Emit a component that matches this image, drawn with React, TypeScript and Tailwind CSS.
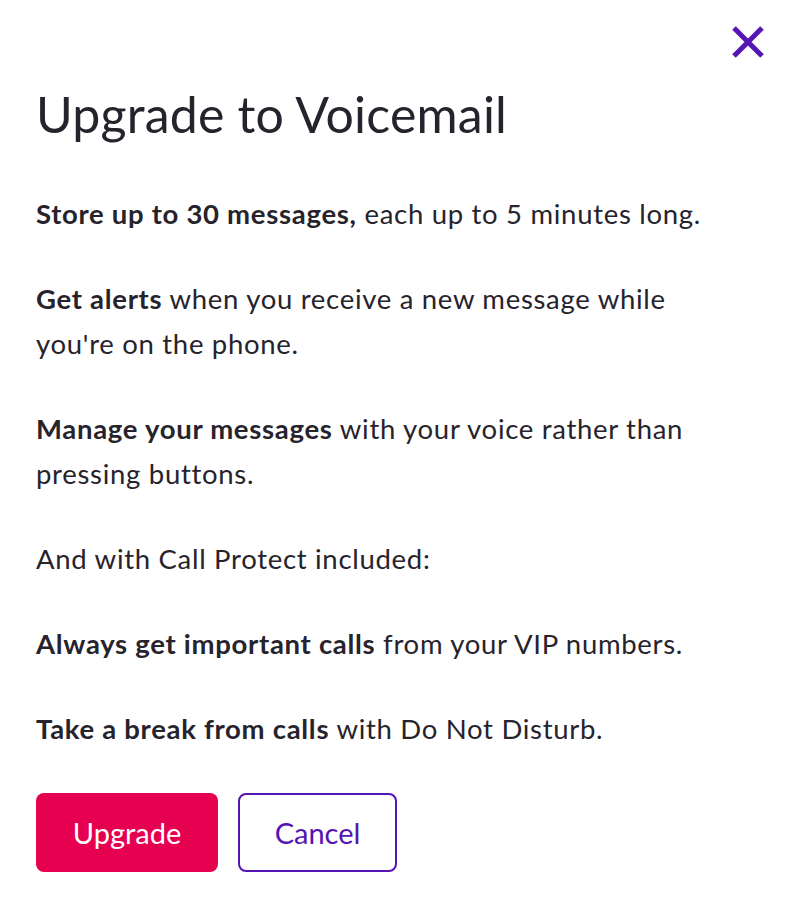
export default function App() {
  return (
    <div className="relative min-h-[910px] w-[787px] bg-white px-9 pt-[83px] text-[#26232c]" style={{ fontFamily: "Lato, 'Noto Sans', sans-serif" }}>
      <button className="absolute right-[22px] top-[25px] text-[#5514b4]" aria-label="Close">
        <svg width="34" height="34" viewBox="0 0 34 34" fill="none" stroke="currentColor" strokeWidth="5">
          <path d="M3 3 L31 31 M31 3 L3 31" />
        </svg>
      </button>
      <h1 className="text-[50px] leading-[62px] font-normal tracking-[0.2px]">Upgrade to Voicemail</h1>
      <div className="mt-[46px] flex flex-col gap-10 text-[27.5px] leading-[45px] tracking-[0.7px]">
        <p><b className="font-bold">Store up to 30 messages,</b> each up to 5 minutes long.</p>
        <p className="w-[650px]"><b className="font-bold">Get alerts</b> when you receive a new message while you're on the phone.</p>
        <p className="w-[680px]"><b className="font-bold">Manage your messages</b> with your voice rather than pressing buttons.</p>
        <p>And with Call Protect included:</p>
        <p><b className="font-bold">Always get important calls</b> from your VIP numbers.</p>
        <p><b className="font-bold">Take a break from calls</b> with Do Not Disturb.</p>
      </div>
      <div className="mt-[42px] flex gap-5">
        <button className="h-[79px] w-[182px] rounded-lg bg-[#e60050] text-[29px] text-white">Upgrade</button>
        <button className="h-[79px] w-[159px] rounded-lg border-2 border-[#5514b4] text-[29px] text-[#5514b4]">Cancel</button>
      </div>
    </div>
  );
}
